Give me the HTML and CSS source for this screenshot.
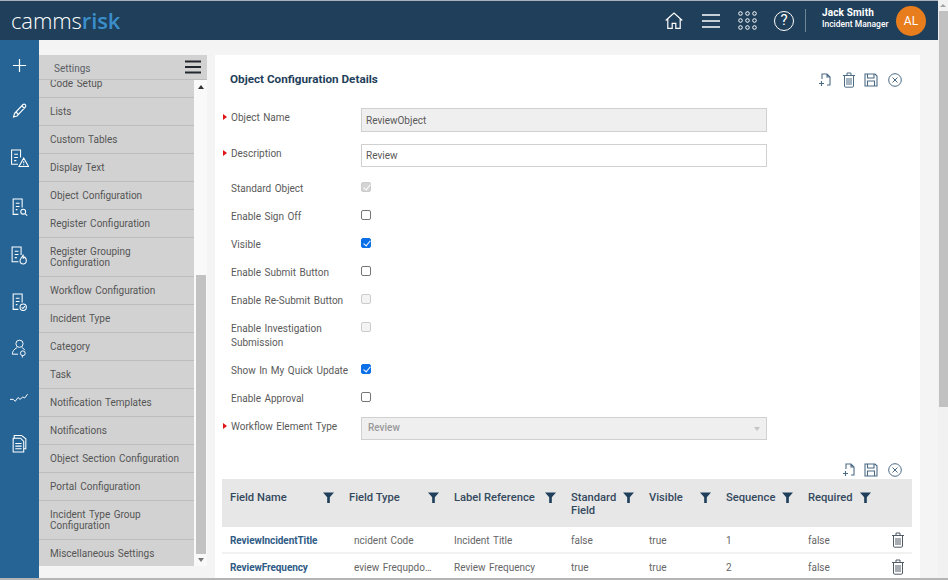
FILE: index.html
```html
<!DOCTYPE html>
<html lang="en">
<head>
<meta charset="utf-8">
<title>Object Configuration Details</title>
<link rel="stylesheet" href="styles.css">
</head>
<body>
<svg class="defs" width="0" height="0" aria-hidden="true">
  <defs>
    <symbol id="i-new" viewBox="0 0 14 14"><path d="M4 6V1h5l3 3v8H9M9 1v3h3M1 10.500h5M3.500 8v5" fill="none" stroke="currentColor" stroke-width="1.100"/></symbol>
    <symbol id="i-trash" viewBox="0 0 14 16"><path d="M1 3.500h12M5 3.500V1h4v2.500M2.500 3.500V14a1.200 1.200 0 0 0 1.200 1.200h6.600a1.200 1.200 0 0 0 1.200-1.200V3.500M5 6v7M7 6v7M9 6v7" fill="none" stroke="currentColor" stroke-width="1"/></symbol>
    <symbol id="i-save" viewBox="0 0 14 14"><path d="M1 1h10l2 2v10H1zM3.500 1v4h6.500V1M3.500 13V8h7v5" fill="none" stroke="currentColor" stroke-width="1.100"/></symbol>
    <symbol id="i-close" viewBox="0 0 14 14"><circle cx="7" cy="7" r="6.300" fill="none" stroke="currentColor" stroke-width="1"/><path d="M4.500 4.500l5 5M9.500 4.500l-5 5" fill="none" stroke="currentColor" stroke-width="1"/></symbol>
    <symbol id="i-filter" viewBox="0 0 10 10"><path d="M0 .5h10L6.200 4.800V10H3.800V4.800z" fill="currentColor"/></symbol>
  </defs>
</svg>
<div class="window">
  <div class="app">
    <header class="topbar">
      <div class="logo">camms<b>risk</b></div>
      <div class="top-tools">
        <svg class="ti ti-home" viewBox="0 0 18 17"><path d="M.7 8.500L9 1l8.300 7.500M2.800 7v9.300h4.400v-5h3.600v5h4.400V7" fill="none" stroke="currentColor" stroke-width="1.200"/></svg>
        <svg class="ti ti-menu" viewBox="0 0 18 14"><path d="M0 1h18M0 7h18M0 13h18" stroke="currentColor" stroke-width="1.700"/></svg>
        <svg class="ti ti-grid" viewBox="0 0 19 19" fill="none" stroke="currentColor" stroke-width="1"><circle cx="2.500" cy="2.500" r="1.800"/><circle cx="9.500" cy="2.500" r="1.800"/><circle cx="16.500" cy="2.500" r="1.800"/><circle cx="2.500" cy="9.500" r="1.800"/><circle cx="9.500" cy="9.500" r="1.800"/><circle cx="16.500" cy="9.500" r="1.800"/><circle cx="2.500" cy="16.500" r="1.800"/><circle cx="9.500" cy="16.500" r="1.800"/><circle cx="16.500" cy="16.500" r="1.800"/></svg>
        <span class="help">?</span>
        <span class="top-sep"></span>
        <div class="user"><strong>Jack Smith</strong><span>Incident Manager</span></div>
        <span class="avatar">AL</span>
      </div>
    </header>
    <div class="body-row">
      <nav class="rail">
        <svg class="ri ri-plus" viewBox="0 0 16 16"><path d="M8 1v14M1 8h14" stroke="currentColor" stroke-width="1.300"/></svg>
        <svg class="ri" viewBox="0 0 16 16" fill="none" stroke="currentColor" stroke-width="1.100"><path d="M2.500 11.500L11 2.500a1.800 1.800 0 0 1 2.500 2.500L5 14l-3.500 1zM10 4l2.500 2.500M4 10l2 2"/></svg>
        <svg class="ri ri-lg" viewBox="0 0 18 18" fill="none" stroke="currentColor" stroke-width="1"><path d="M7.500 14.500H1.500V1h8.500v7M4 5h3.500M4 8h3.500M4 11h2M13 8.500L8.500 16.500h9zM13 11.500v2M13 14.500v1"/></svg>
        <svg class="ri ri-lg" viewBox="0 0 18 18" fill="none" stroke="currentColor" stroke-width="1"><path d="M8 15.500H3V1h8.500v8M5.500 5h3.500M5.500 8h3.500M5.500 11h1.500"/><circle cx="12.500" cy="13" r="2.300"/><path d="M14.500 15l1.800 1.800"/></svg>
        <svg class="ri ri-lg" viewBox="0 0 18 18" fill="none" stroke="currentColor" stroke-width="1"><path d="M8 15H2V1h8.500v7.500M4.500 5h3.500M4.500 8h3.500M4.500 11h2M12.500 8c0 2-3 3.500-3 6a3 3 0 0 0 6 0c0-2-1-2.500-1.500-3.500-.5.800-1 1-1.500 1z"/></svg>
        <svg class="ri ri-lg" viewBox="0 0 18 18" fill="none" stroke="currentColor" stroke-width="1"><path d="M8 15.500H3V1h8.500v8M5.500 5h3.500M5.500 8h3.500M5.500 11h1.500"/><circle cx="12.500" cy="13.500" r="3"/><path d="M11 13.500l1.200 1.200 2-2.200"/></svg>
        <svg class="ri ri-lg" viewBox="0 0 18 20" fill="none" stroke="currentColor" stroke-width="1"><circle cx="9" cy="5" r="3.800"/><path d="M6.500 9C3 11 1.500 13 1.500 16h6M11.500 9c1.500.7 2.500 1.700 3 2.800"/><circle cx="12.500" cy="15" r="2.500"/><path d="M12 17.500v2"/></svg>
        <svg class="ri ri-lg" viewBox="0 0 20 12" fill="none" stroke="currentColor" stroke-width="1"><path d="M0 8h3.500l2 2 3-4 2 2 3-2.500 2 1 3-4"/></svg>
        <svg class="ri ri-lg" viewBox="0 0 16 18" fill="none" stroke="currentColor" stroke-width="1"><path d="M3 4V1.500h7l4 3V14h-2"/><path d="M2 4h7l3 3v10H2zM4 9h6M4 11.500h6M4 14h6"/></svg>
      </nav>
      <aside class="panel">
        <div class="panel-head"><span>Settings</span>
          <svg class="panel-burger" viewBox="0 0 16 14"><path d="M0 1.500h16M0 7h16M0 12.500h16" stroke="currentColor" stroke-width="2.200"/></svg>
        </div>
        <div class="panel-body">
          <ul class="menu">
            <li>Code Setup</li>
            <li>Lists</li>
            <li>Custom Tables</li>
            <li>Display Text</li>
            <li>Object Configuration</li>
            <li>Register Configuration</li>
            <li class="two">Register Grouping Configuration</li>
            <li>Workflow Configuration</li>
            <li>Incident Type</li>
            <li>Category</li>
            <li>Task</li>
            <li>Notification Templates</li>
            <li>Notifications</li>
            <li>Object Section Configuration</li>
            <li>Portal Configuration</li>
            <li class="two">Incident Type Group Configuration</li>
            <li>Miscellaneous Settings</li>
          </ul>
          <div class="menu-scroll">
            <span class="arrow up"></span>
            <span class="menu-thumb"></span>
            <span class="arrow down"></span>
          </div>
        </div>
      </aside>
      <main class="content">
        <section class="card">
          <div class="card-head">
            <h1>Object Configuration Details</h1>
            <div class="tools">
              <svg class="tool"><use href="#i-new"/></svg>
              <svg class="tool"><use href="#i-trash"/></svg>
              <svg class="tool"><use href="#i-save"/></svg>
              <svg class="tool"><use href="#i-close"/></svg>
            </div>
          </div>
          <form class="form">
            <div class="row row-name"><label class="req">Object Name</label><div class="input readonly">ReviewObject</div></div>
            <div class="row row-desc"><label class="req">Description</label><div class="input">Review</div></div>
            <div class="row chk"><label>Standard Object</label><span class="box disabled-on"></span></div>
            <div class="row chk"><label>Enable Sign Off</label><span class="box"></span></div>
            <div class="row chk"><label>Visible</label><span class="box on"></span></div>
            <div class="row chk"><label>Enable Submit Button</label><span class="box"></span></div>
            <div class="row chk"><label>Enable Re-Submit Button</label><span class="box disabled"></span></div>
            <div class="row chk tall"><label>Enable Investigation Submission</label><span class="box disabled"></span></div>
            <div class="row chk"><label>Show In My Quick Update</label><span class="box on"></span></div>
            <div class="row chk"><label>Enable Approval</label><span class="box"></span></div>
            <div class="row row-sel"><label class="req">Workflow Element Type</label><div class="input select">Review<i class="caret"></i></div></div>
          </form>
          <div class="tools table-tools">
            <svg class="tool"><use href="#i-new"/></svg>
            <svg class="tool"><use href="#i-save"/></svg>
            <svg class="tool"><use href="#i-close"/></svg>
          </div>
          <table class="grid">
            <colgroup><col class="c1"><col class="c2"><col class="c3"><col class="c4"><col class="c5"><col class="c6"><col class="c7"><col class="c8"></colgroup>
            <thead>
              <tr>
                <th><div class="th">Field Name<svg class="flt"><use href="#i-filter"/></svg></div></th>
                <th><div class="th">Field Type<svg class="flt"><use href="#i-filter"/></svg></div></th>
                <th><div class="th">Label Reference<svg class="flt"><use href="#i-filter"/></svg></div></th>
                <th><div class="th">Standard Field<svg class="flt"><use href="#i-filter"/></svg></div></th>
                <th><div class="th">Visible<svg class="flt"><use href="#i-filter"/></svg></div></th>
                <th><div class="th">Sequence<svg class="flt"><use href="#i-filter"/></svg></div></th>
                <th><div class="th">Required<svg class="flt"><use href="#i-filter"/></svg></div></th>
                <th></th>
              </tr>
            </thead>
            <tbody>
              <tr>
                <td><a class="link">ReviewIncidentTitle</a></td>
                <td><div class="clip">ncident Code</div></td>
                <td>Incident Title</td><td>false</td><td>true</td><td>1</td><td>false</td>
                <td><svg class="row-trash"><use href="#i-trash"/></svg></td>
              </tr>
              <tr>
                <td><a class="link">ReviewFrequency</a></td>
                <td><div class="clip">eview Frequpdo…</div></td>
                <td>Review Frequency</td><td>true</td><td>true</td><td>2</td><td>false</td>
                <td><svg class="row-trash"><use href="#i-trash"/></svg></td>
              </tr>
            </tbody>
          </table>
        </section>
      </main>
    </div>
  </div>
  <div class="page-scroll"><span class="page-up"></span><span class="page-thumb"></span></div>
</div>
</body>
</html>
```

FILE: styles.css
```css
* { box-sizing: border-box; }
html, body { margin: 0; height: 100%; overflow: hidden; }
body { font-family: Roboto, "Liberation Sans", sans-serif; font-size: 10px; color: #555; background: #f4f4f4; }
.defs { position: absolute; }
.window { display: flex; width: 948px; height: 580px; border-bottom: 2px solid #b5b5b5; }
.app { width: 938px; display: flex; flex-direction: column; min-width: 0; }

.topbar { height: 40px; flex: none; background: #1f3f5b; border-top: 1px solid #a9b2ba; display: flex; align-items: center; justify-content: space-between; color: #fff; }
.logo { margin-left: 11px; margin-top: -2px; font-family: "Open Sans", sans-serif; font-size: 22px; font-weight: 300; letter-spacing: -.1px; line-height: 36px; }
.logo b { color: #3a8fcb; font-weight: 600; }
.top-tools { display: flex; align-items: center; }
.ti { display: block; color: #fff; }
.ti-home { width: 18px; height: 17px; margin-right: 19px; }
.ti-menu { width: 18px; height: 14px; margin-right: 18px; }
.ti-grid { width: 19px; height: 19px; margin-right: 17px; }
.help { width: 20px; height: 20px; border: 1.500px solid #fff; border-radius: 50%; font-size: 15px; line-height: 17px; text-align: center; margin-right: 11px; }
.top-sep { width: 1px; height: 23px; background: #6f8598; margin-right: 16px; }
.user { display: flex; flex-direction: column; color: #fff; width: 67px; margin-right: 7px; margin-bottom: 5px; white-space: nowrap; }
.user strong { font-size: 10px; line-height: 12px; letter-spacing: .15px; }
.user span { font-size: 8.500px; line-height: 11px; font-weight: 500; }
.avatar { width: 30px; height: 30px; border-radius: 50%; background: #e87d1e; font-size: 12px; line-height: 30px; text-align: center; margin-right: 12px; }

.body-row { flex: 1; display: flex; min-height: 0; }
.rail { width: 39px; flex: none; background: #266496; color: #fff; display: grid; grid-template-rows: 50px 40px 56px 42px 54px 40px 52px 46px 46px; justify-items: center; align-items: center; align-content: start; }
.ri { width: 16px; height: 16px; display: block; }
.ri-plus { width: 15px; height: 15px; }
.ri-lg { width: 19px; height: 19px; }

.panel { width: 168px; flex: none; margin-top: 15px; display: flex; flex-direction: column; height: 511px; }
.panel-head { height: 25px; flex: none; background: #d2d2d2; border-bottom: 1px solid #bdbdbd; display: flex; align-items: center; justify-content: space-between; padding: 2px 6px 0 15px; color: #5b5f66; font-size: 10px; word-spacing: 1px; position: relative; z-index: 1; }
.panel-burger { width: 16px; height: 14px; color: #23282e; margin-top: -3px; }
.panel-body { flex: 1; display: flex; min-height: 0; overflow: hidden; }
.menu { list-style: none; margin: -10px 0 0; padding: 0; width: 155px; flex: none; background: #d2d2d2; }
.menu li { height: 28px; padding: 0 8px 0 11px; display: flex; align-items: center; border-bottom: 1px solid #bcbcbc; color: #555; font-size: 10px; line-height: 11px; word-spacing: 1px; }
.menu li.two { height: 39px; }
.menu-scroll { width: 13px; flex: none; background: #f9f9f9; display: flex; flex-direction: column; align-items: center; position: relative; }
.menu-thumb { position: absolute; top: 195px; left: 2px; width: 10px; height: 279px; background: #c2c2c2; }
.arrow { position: absolute; left: 4px; width: 0; height: 0; border-left: 3px solid transparent; border-right: 3px solid transparent; }
.arrow.up { top: 5px; border-bottom: 4px solid #333; }
.arrow.down { top: 478px; border-top: 4px solid #777; }

.content { flex: 1; min-width: 0; padding: 15px 18px 0 8px; overflow: hidden; }
.card { background: #fff; height: 100%; padding: 0 8px 0 7px; }
.card-head { display: flex; justify-content: space-between; height: 53px; padding: 17px 0 0 8px; }
h1 { margin: 0; font-size: 11.700px; line-height: 15px; font-weight: 700; color: #1f3f5b; }
.tools { display: flex; align-items: center; color: #4c6a85; }
.card-head .tools { height: 16px; padding-right: 10px; }
.tool { width: 14px; height: 16px; display: block; margin-left: 8px; color: #4c6a85; }
.tool:last-child { margin-left: 10px; }
.card-head .tool:first-child { margin-right: 2px; }

.form { display: block; }
.row { display: flex; position: relative; padding-left: 9px; }
.row label { width: 130px; flex: none; font-size: 10px; line-height: 14px; word-spacing: 1px; color: #5a5a5a; }
.req::before { content: ""; position: absolute; left: 1px; top: 6px; border-left: 4px solid #e01414; border-top: 3.500px solid transparent; border-bottom: 3.500px solid transparent; }
.input { width: 406px; height: 24px; border: 1px solid #d0d0d0; padding: 1px 4px 0; line-height: 22px; font-size: 10px; color: #5a5a5a; }
.readonly { background: #efefef; }
.row-name { height: 36px; }
.row-name label { padding-top: 3px; }
.row-desc { height: 35px; }
.row-desc label { padding-top: 3px; }
.row-desc .input { height: 23px; padding-top: 0; }
.chk { height: 28px; padding-top: 2px; }
.chk.tall { height: 42px; }
.chk label { margin-top: 1px; }
.box { width: 10px; height: 10px; margin-top: 1px; border: 1px solid #767676; border-radius: 2px; background: #fff; display: block; position: relative; flex: none; }
.box.on { background: #0b6fe8; border-color: #0b6fe8; }
.box.disabled { border-color: #ccc; background: #f3f3f3; }
.box.disabled-on { border-color: #ccc; background: #d4d4d4; }
.box.on::after, .box.disabled-on::after { content: ""; position: absolute; left: 2.500px; top: 0; width: 3px; height: 6px; border: solid #fff; border-width: 0 1.500px 1.500px 0; transform: rotate(40deg); }
.row-sel { height: 23px; }
.row-sel label { padding-top: 3px; }
.select { height: 23px; background: #efefef; color: #9a9a9a; font-weight: 500; padding: 0 6px; line-height: 20px; position: relative; }
.caret { position: absolute; right: 6px; top: 9px; border-left: 3.500px solid transparent; border-right: 3.500px solid transparent; border-top: 4px solid #c5c5c5; }

.table-tools { justify-content: flex-end; height: 39px; padding-top: 21px; padding-right: 10px; }
.grid { width: 690px; border-collapse: separate; border-spacing: 0; table-layout: fixed; }
.c1 { width: 119px; } .c2 { width: 105px; } .c3 { width: 117px; } .c4 { width: 78px; }
.c5 { width: 77px; } .c6 { width: 82px; } .c7 { width: 78px; } .c8 { width: 34px; }
.grid th { background: #e7e7e7; height: 48px; padding: 0 0 0 8px; text-align: left; vertical-align: top; font-weight: 500; font-size: 11.200px; line-height: 13px; color: #34495e; }
.th { display: flex; justify-content: space-between; padding-top: 12px; padding-right: 7px; }
.flt { width: 11px; height: 11px; color: #1f3f5b; flex: none; margin-top: 1px; }
.grid td { height: 27px; padding: 1px 0 0 8px; border-bottom: 2px solid #f1f1f1; font-size: 10px; word-spacing: 1px; color: #666; white-space: nowrap; overflow: hidden; }
.link { color: #2f5b85; font-weight: 700; word-spacing: 0; letter-spacing: -.08px; }
.clip { padding-left: 5px; }
.row-trash { width: 14px; height: 16px; color: #4f5a64; display: block; margin-left: 5px; }

.page-scroll { width: 10px; flex: none; background: #f1f1f1; position: relative; }
.page-up { position: absolute; left: 2px; top: 4px; border-left: 3px solid transparent; border-right: 3px solid transparent; border-bottom: 3px solid #a3a3a3; }
.page-thumb { position: absolute; top: 11px; left: 1px; width: 9px; height: 396px; background: #c1c1c1; }
```
